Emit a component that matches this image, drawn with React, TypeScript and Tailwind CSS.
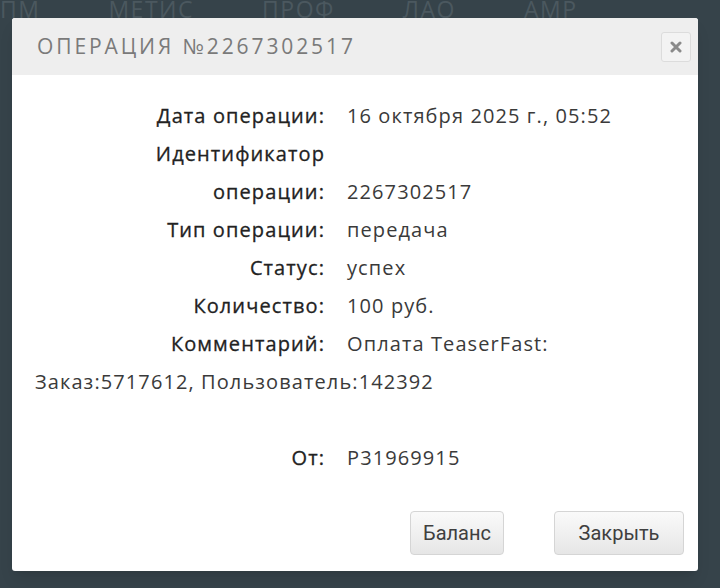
const rows: { label: string; value: string }[] = [
  { label: 'Дата операции:', value: '16 октября 2025 г., 05:52' },
  { label: 'Идентификатор', value: '' },
  { label: 'операции:', value: '2267302517' },
  { label: 'Тип операции:', value: 'передача' },
  { label: 'Статус:', value: 'успех' },
  { label: 'Количество:', value: '100 руб.' },
  { label: 'Комментарий:', value: 'Оплата TeaserFast: Заказ:5717612, Пользователь:142392' },
];

const tabs = ['ПМ', 'МЕТИС', 'ПРОФ', 'ЛАО', 'АМР'];

function Row({ label, value }: { label: string; value: string }) {
  return (
    <div className="leading-[38px]">
      <span className="inline-block w-[290px] text-right tracking-[1.1px] text-[#222222] [-webkit-text-stroke:0.3px_#222222]">{label}</span>
      <span className="ml-[22px] tracking-[1.1px] text-[#3a3a3a]">{value}</span>
    </div>
  );
}

export default function App() {
  return (
    <div className="relative h-[588px] w-[720px] overflow-hidden bg-[#36434a] font-['Open_Sans',sans-serif]">
      {/* page behind the overlay */}
      <div className="flex gap-[68px] text-[23px] tracking-[1.5px] text-[#4b585f]">
        {tabs.map((t) => (
          <span key={t} className="leading-[18px]">{t}</span>
        ))}
      </div>

      <div className="absolute left-[12px] top-[18px] w-[686px] overflow-hidden rounded-[3px] bg-white shadow-lg">
        <div className="flex h-[57px] items-center justify-between bg-[#eeeeee] pl-[25px] pr-[7px]">
          <h1 className="text-[21px] uppercase tracking-[2.9px] text-[#7a7a7a]">Операция №2267302517</h1>
          <button className="flex h-[30px] w-[30px] items-center justify-center rounded-[3px] border border-[#dcdcdc] bg-[#f3f3f3]">
            <svg width="12" height="12" viewBox="0 0 12 12">
              <path d="M2 2 L10 10 M10 2 L2 10" stroke="#8a8a8a" strokeWidth="3" strokeLinecap="round" />
            </svg>
          </button>
        </div>

        <div className="px-[23px] pt-[22px] text-[20px]">
          {rows.map((r) => (
            <Row key={r.label} label={r.label} value={r.value} />
          ))}
          <div className="h-[38px]" />
          <Row label="От:" value="P31969915" />
        </div>

        <div className="flex justify-end gap-[50px] px-[14px] pb-[16px] pt-[34px]">
          <button className="h-[44px] w-[94px] rounded-[4px] border border-[#d5d5d5] bg-gradient-to-b from-[#fafafa] to-[#e6e6e6] text-[20px] text-[#3f3f3f] font-['Roboto',sans-serif]">
            Баланс
          </button>
          <button className="h-[44px] w-[130px] rounded-[4px] border border-[#d5d5d5] bg-gradient-to-b from-[#fafafa] to-[#e6e6e6] text-[20px] text-[#3f3f3f] font-['Roboto',sans-serif]">
            Закрыть
          </button>
        </div>
      </div>
    </div>
  );
}
